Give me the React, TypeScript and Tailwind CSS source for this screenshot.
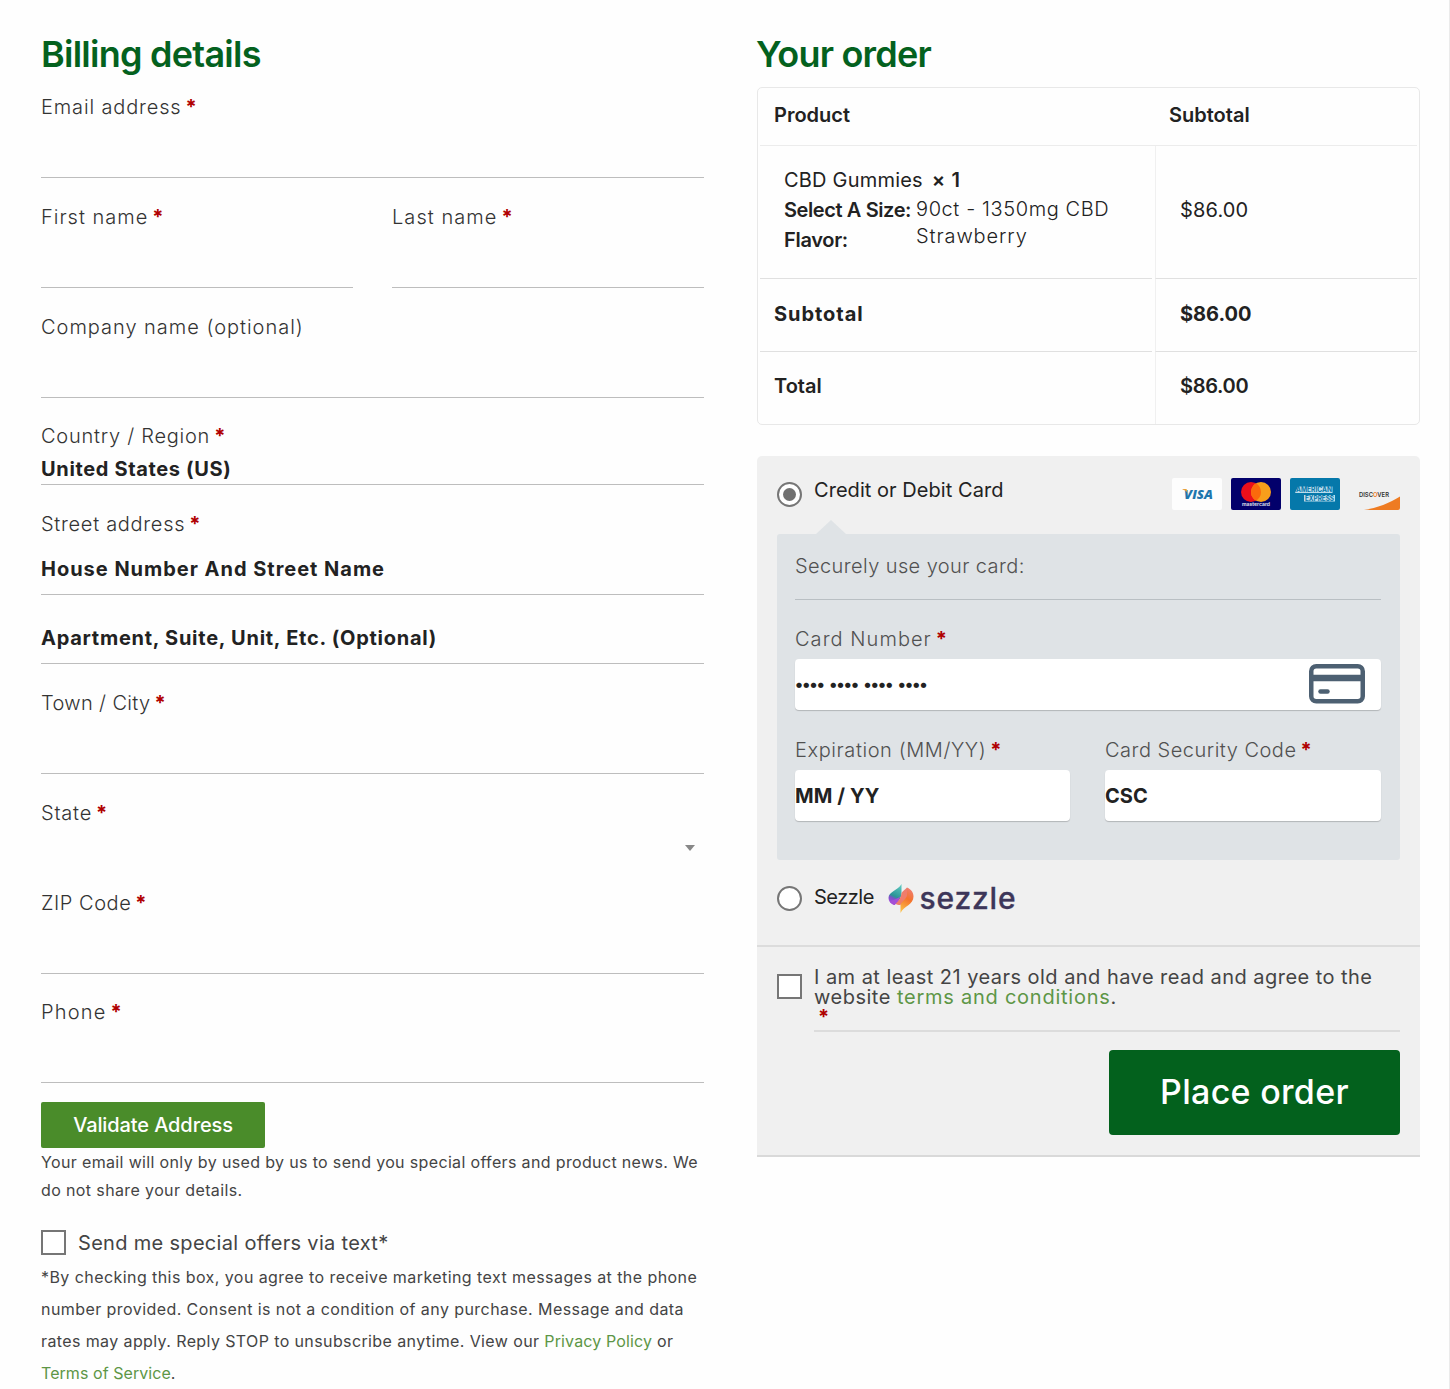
import React from 'react';

const Required = () => <span className="ml-[4px] font-bold text-[#b00000]">*</span>;

type LabelProps = { text: string; track?: string; required?: boolean };

const Label = ({ text, track = '', required = true }: LabelProps) => (
  <label className="flex h-[30px] items-center whitespace-nowrap text-[20px] font-light text-[#333]">
    <span className={track}>{text}</span>
    {required && <Required />}
  </label>
);

const CardLabel = ({ text, track = '' }: LabelProps) => (
  <label className="flex h-[30px] items-center whitespace-nowrap text-[20px] font-light text-[#515151]">
    <span className={track}>{text}</span>
    <Required />
  </label>
);

const Line = () => <div className="h-14 border-b border-[#bdbdbd]" />;

const BillingDetails = () => (
  <section className="w-[663px]">
    <h3 className="h-[54px] whitespace-nowrap text-[36px] leading-[54px] font-semibold text-[#04611e]">
      <span className="tracking-[-0.75px]">Billing details</span>
    </h3>

    <div className="mt-[11px]">
      <Label text="Email address" track="tracking-[0.85px]" />
      <Line />
    </div>

    <div className="mt-6 grid grid-cols-[312px_312px] gap-x-[39px]">
      <div>
        <Label text="First name" track="tracking-[1px]" />
        <Line />
      </div>
      <div>
        <Label text="Last name" track="tracking-[1.05px]" />
        <Line />
      </div>
    </div>

    <div className="mt-6">
      <Label text="Company name (optional)" track="tracking-[0.98px]" required={false} />
      <Line />
    </div>

    <div className="mt-[23px]">
      <Label text="Country / Region" track="tracking-[0.75px]" />
      <div className="h-[34px] border-b border-[#bdbdbd] text-[20px] leading-[36px] font-bold text-[#222]">
        <span className="tracking-[0.65px]">United States (US)</span>
      </div>
    </div>

    <div className="mt-6">
      <Label text="Street address" track="tracking-[0.7px]" />
      <div className="h-14 border-b border-[#bdbdbd] text-[20px] leading-[60px] font-bold text-[#222]">
        <span className="tracking-[0.98px]">House Number And Street Name</span>
      </div>
      <div className="h-[69px] border-b border-[#bdbdbd] text-[20px] leading-[86px] font-bold text-[#222]">
        <span className="tracking-[0.74px]">Apartment, Suite, Unit, Etc. (Optional)</span>
      </div>
    </div>

    <div className="mt-6">
      <Label text="Town / City" track="tracking-[0.35px]" />
      <Line />
    </div>

    <div className="mt-6">
      <Label text="State" track="tracking-[0.8px]" />
      <div className="flex h-10 items-center justify-end pr-[9px]">
        <svg width="10" height="6" viewBox="0 0 10 6" fill="#888">
          <path d="M0 0h10L5 6z" />
        </svg>
      </div>
    </div>

    <div className="mt-5">
      <Label text="ZIP Code" track="tracking-[0.55px]" />
      <Line />
    </div>

    <div className="mt-[23px]">
      <Label text="Phone" track="tracking-[1.2px]" />
      <Line />
    </div>

    <button className="mt-[19px] flex h-[46px] w-[224px] items-center justify-center rounded-[2px] bg-[#4a8c2a] text-[20px] font-medium whitespace-nowrap text-white">
      <span className="tracking-[-0.1px]">Validate Address</span>
    </button>

    <p className="text-[16px] leading-[28px] whitespace-nowrap text-[#444]">
      <span className="tracking-[0.35px]">Your email will only by used by us to send you special offers and product news. We</span>
      <br />
      <span className="tracking-[0.38px]">do not share your details.</span>
    </p>

    <label className="mt-[26px] flex h-[25px] items-center text-[20px] whitespace-nowrap text-[#444]">
      <span className="mr-3 size-[25px] border-2 border-[#767676] bg-white" />
      <span className="tracking-[0.31px]">Send me special offers via text*</span>
    </label>

    <p className="mt-[6px] text-[16px] leading-[32px] whitespace-nowrap text-[#444]">
      <span className="tracking-[0.43px]">*By checking this box, you agree to receive marketing text messages at the phone</span>
      <br />
      <span className="tracking-[0.43px]">number provided. Consent is not a condition of any purchase. Message and data</span>
      <br />
      <span className="tracking-[0.39px]">
        rates may apply. Reply STOP to unsubscribe anytime. View our{' '}
        <a className="tracking-[0.14px] text-[#5d9646]">Privacy Policy</a> or
      </span>
      <br />
      <span>
        <a className="tracking-[0.06px] text-[#5d9646]">Terms of Service</a>.
      </span>
    </p>
  </section>
);

const OrderTable = () => (
  <div className="mt-[6px] h-[338px] rounded-[5px] border border-[#e8e8e8] px-[2px] text-[20px] whitespace-nowrap text-[#222]">
    <div className="grid h-[58px] grid-cols-[395px_1fr] border-b border-[#ececec] font-semibold">
      <div className="pl-[14px] leading-[55px]">
        <span>Product</span>
      </div>
      <div className="pl-[14px] leading-[55px]">
        <span>Subtotal</span>
      </div>
    </div>

    <div className="grid h-[133px] grid-cols-[392px_1fr] gap-x-[3px]">
      <div className="border-b border-[#e0e0e0] pt-[19px] pl-6">
        <div className="flex h-[30px] items-center">
          <span className="tracking-[0.2px]">CBD Gummies</span>
          <span className="ml-[9px] font-semibold tracking-[0.6px]">× 1</span>
        </div>
        <div className="flex">
          <div className="w-[132px] font-semibold">
            <div className="leading-[30px]">
              <span className="tracking-[-0.4px]">Select A Size:</span>
            </div>
            <div className="leading-[30px]">
              <span className="tracking-[-0.3px]">Flavor:</span>
            </div>
          </div>
          <div className="pt-px font-light">
            <div className="leading-[27px]">
              <span className="tracking-[0.6px]">90ct - 1350mg CBD</span>
            </div>
            <div className="leading-[27px]">
              <span className="tracking-[0.9px]">Strawberry</span>
            </div>
          </div>
        </div>
      </div>
      <div className="border-b border-l border-b-[#e0e0e0] border-l-[#f0f0f0] pl-6 leading-[128px]">
        <span className="tracking-[0.15px]">$86.00</span>
      </div>
    </div>

    <div className="grid h-[73px] grid-cols-[392px_1fr] gap-x-[3px] font-bold">
      <div className="border-b border-[#e0e0e0] pl-[14px] leading-[70px]">
        <span className="tracking-[0.95px]">Subtotal</span>
      </div>
      <div className="border-b border-l border-b-[#e0e0e0] border-l-[#f0f0f0] pl-6 leading-[70px]">
        <span>$86.00</span>
      </div>
    </div>

    <div className="grid h-[72px] grid-cols-[392px_1fr] gap-x-[3px] font-semibold">
      <div className="pl-[14px] leading-[69px]">
        <span>Total</span>
      </div>
      <div className="border-l border-[#f0f0f0] pl-6 leading-[69px]">
        <span className="tracking-[-0.3px]">$86.00</span>
      </div>
    </div>
  </div>
);

const CardLogos = () => (
  <div className="mr-px flex gap-[9px]">
    <svg width="50" height="32" viewBox="0 0 50 32">
      <rect width="50" height="32" rx="2" fill="#fdfdfd" />
      <text x="12" y="21" fontFamily="Open Sans, sans-serif" fontSize="13" fontWeight="800" fontStyle="italic" fill="#1f76ad" textLength="29" lengthAdjust="spacingAndGlyphs">VISA</text>
      <path d="M10.500 11h4l2 5.500c-1-2.500-3-4.300-6-5z" fill="#e8a13a" />
    </svg>
    <svg width="50" height="32" viewBox="0 0 50 32">
      <rect width="50" height="32" rx="2" fill="#02006b" />
      <circle cx="20" cy="14" r="10" fill="#eb0f1b" />
      <circle cx="30" cy="14" r="10" fill="#f79e1b" />
      <path d="M25 5.340a10 10 0 0 1 0 17.320a10 10 0 0 1 0-17.320z" fill="#fb6a0c" />
      <text x="11" y="28.300" fontFamily="Inter, sans-serif" fontSize="5" fontWeight="600" fill="#e8e8f4" textLength="28" lengthAdjust="spacingAndGlyphs">mastercard</text>
    </svg>
    <svg width="50" height="32" viewBox="0 0 50 32">
      <rect width="50" height="32" rx="2" fill="#0578aa" />
      <path d="M5 15l3-6.500h34.500V15zM14 17h31v6.500H14z" fill="#b9dcec" />
      <text x="6" y="14.300" fontFamily="Inter, sans-serif" fontSize="7" fontWeight="700" fill="#0578aa" textLength="36" lengthAdjust="spacingAndGlyphs">AMERICAN</text>
      <text x="15" y="22.800" fontFamily="Inter, sans-serif" fontSize="7" fontWeight="700" fill="#0578aa" textLength="29" lengthAdjust="spacingAndGlyphs">EXPRESS</text>
    </svg>
    <svg className="overflow-visible" width="50" height="32" viewBox="0 0 50 32">
      <path d="M15 32C28 30 41 25 51 18.500V30a2 2 0 0 1-2 2z" fill="#ee7b22" />
      <text x="10" y="18.500" fontFamily="Inter, sans-serif" fontSize="6.500" fontWeight="600" fill="#333" textLength="30" lengthAdjust="spacingAndGlyphs">DISC<tspan fill="#ee7b22">O</tspan>VER</text>
    </svg>
  </div>
);

const CardIcon = () => (
  <svg className="-mt-[2px]" width="56" height="40" viewBox="0 0 56 40" fill="none" stroke="#4d6072">
    <rect x="2.250" y="2.250" width="51.500" height="35" rx="5" strokeWidth="4.500" />
    <path d="M2 14h52" strokeWidth="6.500" />
    <path d="M11.500 27.500h7" strokeWidth="4.500" strokeLinecap="round" />
  </svg>
);

const SezzleLogo = () => (
  <svg className="overflow-visible" width="134" height="32" viewBox="0 0 134 32">
    <defs>
      <linearGradient id="szTeal" x1="0.700" y1="0" x2="0.400" y2="1">
        <stop offset="0" stopColor="#5cc8c0" />
        <stop offset="0.600" stopColor="#2b9496" />
        <stop offset="0.720" stopColor="#7a52c8" />
        <stop offset="1" stopColor="#ab4be0" />
      </linearGradient>
      <linearGradient id="szOrange" x1="0.700" y1="0" x2="0.400" y2="1">
        <stop offset="0" stopColor="#ee7f78" />
        <stop offset="0.450" stopColor="#f4732c" />
        <stop offset="1" stopColor="#fbbc45" />
      </linearGradient>
    </defs>
    <path d="M13.500 1v9.500c0 4.500-3.500 8-7 11.500C2.500 20.500.500 18 .500 15 .500 8.500 10 7.500 13.500 1z" fill="url(#szTeal)" />
    <path d="M19 4.500c4.500 2 6.500 5 6.500 9C25.500 21.500 16 23 12.500 30v-9.500C12.500 15 19 12.500 19 4.500z" fill="url(#szOrange)" />
    <path d="M19 4.500v8c-1 4-5 5.500-6.500 9.500-2 0-4-.500-5.500-1 4-4 6-6 6.500-11C15 8 17 6.500 19 4.500z" fill="#ee7d6c" />
    <path d="M12 13.500c-3 3-8 3.500-10.500 5 1 1.700 2.700 2.800 5 3.500 2.500-2.500 5-5 5.500-8.500z" fill="#a44fd6" />
    <text x="31.500" y="25.500" fontFamily="Inter, sans-serif" fontSize="30" fontWeight="500" fill="#3d3659" stroke="#3d3659" strokeWidth="0.300" textLength="96">sezzle</text>
  </svg>
);

const Payment = () => (
  <div className="mt-[31px] h-[701px] rounded-t-[5px] border-b-2 border-[#d9d9d9] bg-[#f0f0f0] whitespace-nowrap">
    <div className="h-[491px] border-b-2 border-[#dcdcdc] px-5 pt-[22px]">
      <div className="flex h-8 items-start justify-between">
        <div className="flex">
          <span className="mt-1 mr-3 flex size-[25px] items-center justify-center rounded-full border-2 border-[#767676] bg-white">
            <span className="size-[13px] rounded-full bg-[#717171]" />
          </span>
          <span className="text-[20px] leading-[24px] tracking-[0.05px] text-[#222]">Credit or Debit Card</span>
        </div>
        <CardLogos />
      </div>

      <svg className="mt-[10px] ml-[39px]" width="30" height="14" viewBox="0 0 30 14" fill="#dfe3e6">
        <path d="M0 14L15 0l15 14z" />
      </svg>
      <div className="h-[326px] rounded-[3px] bg-[#dfe3e6] pr-[19px] pl-[18px] text-[20px]">
        <div className="h-[66px] border-b border-[#b9bfc3] leading-[64px] font-light text-[#515151]">
          <span className="tracking-[0.4px]">Securely use your card:</span>
        </div>
        <div className="mt-6">
          <CardLabel text="Card Number" track="tracking-[1.05px]" />
        </div>
        <div className="mt-[5px] flex h-[51px] items-center justify-between rounded-[4px] bg-white pr-4 shadow-[0_1px_1px_rgba(0,0,0,0.2)]">
          <span className="text-[17px] font-bold tracking-[-0.8px] [word-spacing:2px] text-[#222]">•••• •••• •••• ••••</span>
          <CardIcon />
        </div>
        <div className="mt-[25px] grid grid-cols-[275px_276px] gap-x-[35px]">
          <div>
            <CardLabel text="Expiration (MM/YY)" track="tracking-[0.58px]" />
            <div className="mt-[5px] h-[51px] rounded-[4px] bg-white leading-[53px] font-bold text-[#222] shadow-[0_1px_1px_rgba(0,0,0,0.2)]">
              <span className="tracking-[0.1px]">MM / YY</span>
            </div>
          </div>
          <div>
            <CardLabel text="Card Security Code" track="tracking-[0.5px]" />
            <div className="mt-[5px] h-[51px] rounded-[4px] bg-white leading-[53px] font-bold text-[#222] shadow-[0_1px_1px_rgba(0,0,0,0.2)]">
              <span>CSC</span>
            </div>
          </div>
        </div>
      </div>

      <div className="mt-[23px] flex">
        <span className="mt-[3px] mr-3 size-[25px] rounded-full border-2 border-[#767676] bg-white" />
        <span className="mr-[14px] text-[20px] leading-[28px] tracking-[-0.5px] text-[#222]">Sezzle</span>
        <SezzleLogo />
      </div>
    </div>

    <div className="px-5 pt-5">
      <div className="flex">
        <span className="mt-[7px] mr-3 size-[25px] shrink-0 border-2 border-[#767676] bg-white" />
        <div className="h-[65px] grow border-b-2 border-[#dcdcdc] text-[20px] leading-[20px] text-[#444]">
          <span className="tracking-[0.46px]">I am at least 21 years old and have read and agree to the</span>
          <br />
          <span className="tracking-[0.5px]">
            website <a className="tracking-[0.75px] text-[#5d9646]">terms and conditions</a>.
          </span>
          <br />
          <Required />
        </div>
      </div>
      <button className="mt-[18px] ml-auto flex h-[85px] w-[291px] items-center justify-center rounded-[4px] bg-[#03611d] pb-[3px] text-[34px] font-medium text-white">
        <span className="tracking-[0.3px]">Place order</span>
      </button>
    </div>
  </div>
);

export default function App() {
  return (
    <div className="h-[1389px] w-[1450px] overflow-hidden border-r border-[#ebebeb] bg-[#fefefe] pt-[27px] pl-[41px] font-['Inter',sans-serif]">
      <div className="flex gap-[53px]">
        <BillingDetails />
        <section className="w-[663px]">
          <h3 className="-ml-px h-[54px] text-[36px] leading-[54px] font-semibold whitespace-nowrap text-[#04611e]">
            <span className="tracking-[-0.8px]">Your order</span>
          </h3>
          <OrderTable />
          <Payment />
        </section>
      </div>
    </div>
  );
}
